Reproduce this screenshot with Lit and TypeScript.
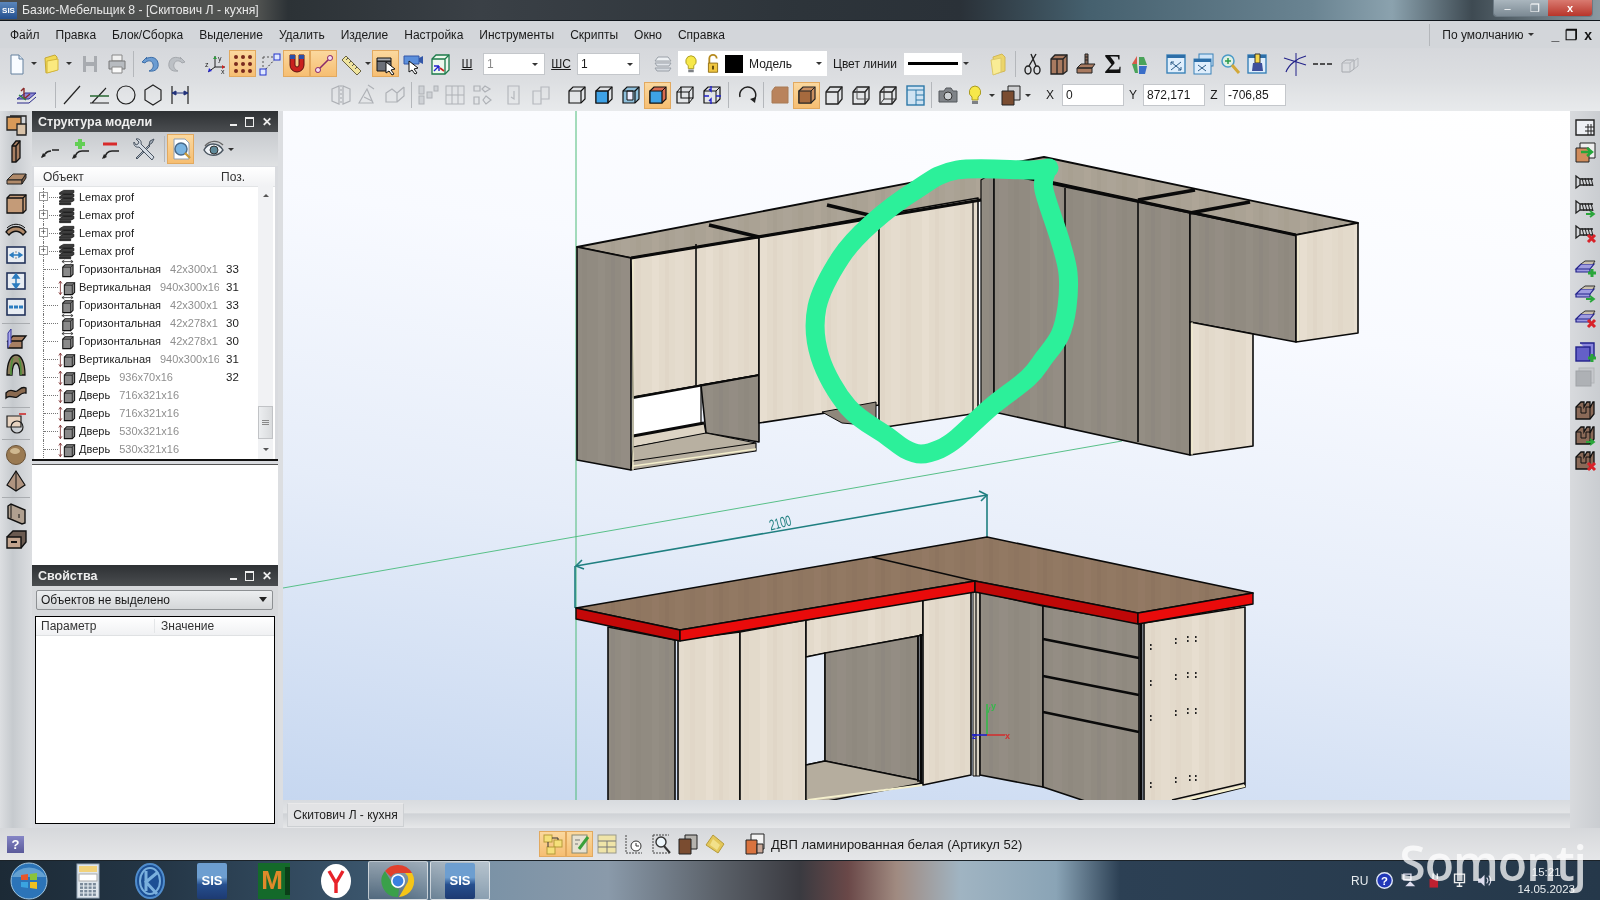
import { LitElement, css, html, svg } from "lit";
import { customElement } from "lit/decorators.js";

const slab = (f = "#b08a6a") => svg`<path d="M3 15l6-6h13l-4 6z" fill=${f} stroke="#222"/><path d="M3 15h15v4H3z" fill=${f} stroke="#222"/><path d="M18 15l4-6v4l-4 6z" fill="#7d5f48" stroke="#222"/>`;
const box = (f = "none", s = "#222") => svg`<path d="M4 9l4-5h12v12l-4 5H4z" fill=${f} stroke=${s} stroke-width="1.3"/><path d="M4 9h12v12M16 9l4-5" fill="none" stroke=${s} stroke-width="1.3"/>`;
const tile = (inner: unknown) => svg`<rect x="3" y="4" width="18" height="16" fill="#e8edf3" stroke="#22325a" stroke-width="1.6"/>${inner}`;
const screw = (extra: unknown = "") => svg`<path d="M3 6l4 3v6l-4 3zM7 9h13M7 15h13" fill="none" stroke="#222" stroke-width="1.3"/><path d="M9 8l2 8M12 8l2 8M15 8l2 8M18 8l2 8" stroke="#222"/>${extra}`;
const plus = svg`<path d="M15 18h8M19 14v8" stroke="#2aa63a" stroke-width="3"/>`;
const arrow = svg`<path d="M13 19h7m-3-3l4 3-4 3" fill="none" stroke="#2aa63a" stroke-width="1.8"/>`;
const cross = svg`<path d="M15 15l7 7M22 15l-7 7" stroke="#d8232a" stroke-width="3"/>`;
const plate = (extra: unknown = "") => svg`<path d="M3 14l5-5h13l-4 5zM3 14h14v3H3z" fill="#9f9ce0" stroke="#22228a" stroke-width="1.2"/><path d="M8 9l4-3h10l-2 3" fill="#c9c0ae" stroke="#333"/>${extra}`;
const notch = (extra: unknown = "") => svg`<path d="M3 21V9l5-5h3v5l3-5h3v6l3-6h1v12l-4 5z" fill="#8a6a58" stroke="#111" stroke-width="1.3"/><path d="M3 9h5v6h5v-6h4v12" fill="none" stroke="#111"/>${extra}`;
const fp = (c: string, s: string) => svg`<path d="M4 8l4-4h12v12l-4 4H4z" fill="none" stroke="#111" stroke-width="1.2"/><path d=${s} fill=${c} stroke="#111" stroke-width="1.1"/><path d="M4 8h12v12M16 8l4-4" fill="none" stroke="#111" stroke-width="1.2"/>`;

const ICONS: Record<string, unknown> = {
  doc: svg`<path d="M6 3h8l4 4v15H6z" fill="#f8fbff" stroke="#64809e"/><path d="M14 3v4h4" fill="#d8e4f0" stroke="#64809e"/>`,
  folder: svg`<path d="M5 6l10-3 2 2v13l-11 3z" fill="#f1d955" stroke="#c5a836"/><path d="M7 9l11-2v11l-11 3z" fill="#fbe97f" stroke="#d4b63c"/>`,
  save: svg`<path d="M5 4h14v16H5z" fill="#a8abb0"/><path d="M8 4h8v6H8zM8 14h8v6H8z" fill="#d8dadd"/>`,
  print: svg`<path d="M7 3h10v6H7z" fill="#f0f0f0" stroke="#888"/><path d="M4 9h16v8H4z" fill="#b7bbc0" stroke="#777"/><path d="M7 15h10v6H7z" fill="#fafafa" stroke="#888"/>`,
  undo: svg`<path d="M9 5l-5 5 3 1c2-3 7-3 8 1 1 3-1 6-4 7 7 1 10-3 9-8-1-6-8-7-12-4z" fill="#6b9cd2" stroke="#3d6ea8"/>`,
  redo: svg`<path d="M15 5l5 5-3 1c-2-3-7-3-8 1-1 3 1 6 4 7-7 1-10-3-9-8 1-6 8-7 12-4z" fill="#bcc0c5" stroke="#a5a8ad"/>`,
  axes: svg`<path d="M11 4v11l-7 5M11 15h10" fill="none" stroke="#222"/><text x="14" y="9" class="ti">y</text><text x="17" y="22" class="ti">x</text><text x="1" y="15" class="ti">z</text><path d="M11 4l-2 3h4z" fill="#2a9a3a"/><path d="M21 15l-3-2v4z" fill="#c22"/><path d="M4 20l1-4 3 3z" fill="#22c"/>`,
  grid: svg`<g fill="#7a2a1e">${[5, 12, 19].flatMap((x) => [5, 12, 19].map((y) => svg`<circle cx=${x} cy=${y} r="2"/>`))}</g>`,
  snap: svg`<path d="M5 20L19 5" stroke="#333" stroke-dasharray="2 2"/><path d="M5 5h14M5 5v15" stroke="#555" stroke-dasharray="2 2"/><rect x="16" y="2" width="6" height="6" fill="#dfe8ff" stroke="#23c"/><rect x="2" y="17" width="6" height="6" fill="#dfe8ff" stroke="#23c"/>`,
  magnet: svg`<path d="M5 3v10a7 7 0 0 0 14 0V3h-5v10a2 2 0 0 1-4 0V3z" fill="#c9211e" stroke="#5c1210"/><path d="M5 3h5v4H5z" fill="#2c4fa8"/><path d="M14 3h5v4h-5z" fill="#2c4fa8"/>`,
  linesnap: svg`<path d="M4 20L20 4" stroke="#8a2a6a" stroke-width="1.6"/><circle cx="6" cy="18" r="2.5" fill="#f7e0f0" stroke="#8a2a6a"/><circle cx="18" cy="6" r="2.5" fill="#f7e0f0" stroke="#8a2a6a"/>`,
  ruler: svg`<path d="M3 8l4-4 15 15-4 4z" fill="#efe49e" stroke="#6b6440"/><path d="M7 8l2-2M10 11l2-2M13 14l2-2M16 17l2-2" stroke="#555"/>`,
  sel: svg`<path d="M3 9h14v10H3z" fill="#6b6f78" stroke="#111"/><path d="M3 6h14v3H3z" fill="#a8abb0" stroke="#111"/><path d="M12 10l9 7-4 1 3 4-2 1-3-4-3 2z" fill="#fff" stroke="#111"/>`,
  sel2: svg`<path d="M3 4h15v8H3z" fill="#5b8fdb" stroke="#3357a8"/><path d="M18 6l4-2v8l-4-2z" fill="#3357a8"/><path d="M8 9l9 7-4 1 3 4-2 1-3-4-3 2z" fill="#fff" stroke="#111"/>`,
  box3: svg`<path d="M4 7l4-4h13v15l-4 4H4z" fill="#eef9ee" stroke="#1c7a4a" stroke-width="1.3"/><path d="M4 7h13v15M17 7l4-4" fill="none" stroke="#1c7a4a" stroke-width="1.3"/><path d="M6 19l5-5M11 14v5M11 14h-5" stroke="#22c" stroke-width="1.4"/><path d="M12 16l4 3" stroke="#c22" stroke-width="1.6"/>`,
  layers: svg`<path d="M7 5h10l3 4H4z" fill="#eef1f4" stroke="#9aa0a8"/><path d="M4 11h16l-2 3H6z" fill="#e1e5ea" stroke="#9aa0a8"/><path d="M4 16h16l-2 3H6z" fill="#d5dae0" stroke="#9aa0a8"/>`,
  bulb: svg`<path d="M12 3a6 6 0 0 0-3 11v3h6v-3a6 6 0 0 0-3-11z" fill="#f7e84a" stroke="#a99a20"/><path d="M9 18h6v3H9z" fill="#7d8085"/>`,
  lock: svg`<path d="M8 11V6a4 4 0 0 1 8 0" fill="none" stroke="#b58a1e" stroke-width="2"/><path d="M7 11h10v10H7z" fill="#f0c640" stroke="#8f6b10"/><path d="M12 14v4" stroke="#5a4308" stroke-width="2"/>`,
  folder2: svg`<path d="M6 5l9-3 3 3v14l-10 3z" fill="#ecd56a" stroke="#d2b856"/><path d="M4 8l10-2v14l-8 3z" fill="#f9ec95" stroke="#dcc86a"/>`,
  scissors: svg`<ellipse cx="8" cy="18" rx="3" ry="4" fill="none" stroke="#222" stroke-width="1.4"/><ellipse cx="17" cy="18" rx="3" ry="4" fill="none" stroke="#222" stroke-width="1.4"/><path d="M9 14l7-12M16 14L11 2" stroke="#222" stroke-width="1.4"/>`,
  cabinet: svg`<path d="M4 7l4-4h12v16l-4 3H4z" fill="#a87a60" stroke="#222" stroke-width="1.3"/><path d="M4 7h12v15M16 7l4-4M10 7v15" fill="none" stroke="#222" stroke-width="1.3"/>`,
  tool: svg`<path d="M11 2h3v11h-3z" fill="#8a6a58" stroke="#222"/><path d="M3 16l4-4h14l-3 4zM3 16h15v5H3z" fill="#a87a60" stroke="#222"/><path d="M11 5h3M11 8h3" stroke="#222"/>`,
  sigma: svg`<text x="12" y="21" class="sig">Σ</text>`,
  mosaic: svg`<path d="M9 4l-5 8h5z" fill="#d85a4a"/><path d="M9 12H4l3 9h3z" fill="#4aa35a"/><path d="M11 5h5l3 8h-8z" fill="#4aa35a"/><path d="M11 14h8l-2 8h-6z" fill="#3a6ec8"/>`,
  w1: svg`<rect x="3" y="3" width="18" height="18" fill="#dfeefc" stroke="#3a82b8" stroke-width="1.4"/><path d="M3 3h18v3H3z" fill="#2d6ea8"/><path d="M7 10l10 8M17 10L7 18M7 10h3M7 10v3M17 18h-3M17 18v-3" stroke="#2c5c88" fill="none"/>`,
  w2: svg`<rect x="8" y="2" width="14" height="12" fill="#cfe4f8" stroke="#3a82b8"/><rect x="3" y="7" width="17" height="15" fill="#dfeefc" stroke="#3a82b8"/><path d="M3 7h17v3H3z" fill="#2d6ea8"/><path d="M7 13l8 6M15 13l-8 6" stroke="#2c5c88"/>`,
  w3: svg`<circle cx="10" cy="9" r="6" fill="#dff0e4" stroke="#4a9ac8" stroke-width="1.5"/><path d="M10 6v6M7 9h6" stroke="#2a9a4a" stroke-width="1.5"/><path d="M14 13l7 8" stroke="#d2a838" stroke-width="3"/>`,
  w4: svg`<rect x="3" y="3" width="18" height="18" fill="#dfeefc" stroke="#3a82b8" stroke-width="1.4"/><path d="M3 3h18v3H3z" fill="#2d6ea8"/><path d="M10 2h5v9h-5z" fill="#f4d64a" stroke="#333"/><path d="M8 11h9l1 8H7z" fill="#3d4f9a"/>`,
  cutline: svg`<path d="M13 1v23" stroke="#23238a"/><path d="M1 6l22 7M3 20c3-8 12-14 20-16" fill="none" stroke="#23238a" stroke-width="1.2"/>`,
  dashes: svg`<path d="M3 12h5M10 12h5M17 12h5" stroke="#222" stroke-width="1.6"/>`,
  ghost: svg`<path d="M5 11l4-3h8v9l-4 3H5z" fill="none" stroke="#a5a8ad"/><path d="M5 11h8v9M13 11l4-3M17 9l4-3v8l-4 3" fill="none" stroke="#b5b8bd"/>`,
  plane: svg`<path d="M3 16l8-6h11l-7 6z" fill="#8f8ad8" stroke="#2a2a8a"/><path d="M3 20h12l7-6" fill="none" stroke="#2a2a8a"/><path d="M10 16V5M10 5L7 8M10 16l6-5" stroke="#8a2a2a" stroke-width="1.4" fill="none"/><path d="M5 12l7 5" stroke="#2a8a3a" stroke-width="1.4"/>`,
  line: svg`<path d="M4 21L20 3" stroke="#222" stroke-width="1.2"/>`,
  angle: svg`<path d="M3 20h19M3 13h19M5 20L19 5" fill="none" stroke="#222" stroke-width="1.1"/><path d="M3 13h19" stroke="#2a8a3a"/>`,
  circle: svg`<circle cx="12" cy="12" r="9" fill="none" stroke="#222" stroke-width="1.2"/>`,
  hex: svg`<path d="M12 2l8 5v10l-8 5-8-5V7z" fill="none" stroke="#222" stroke-width="1.2"/>`,
  dim: svg`<path d="M4 3v18M20 3v18" stroke="#222" stroke-width="1.2"/><path d="M4 10h16M4 10l4-2v4zM20 10l-4-2v4z" stroke="#22327a" fill="#22327a"/>`,
  g1: svg`<g fill="none" stroke="#aeb1b6" stroke-width="1.2"><path d="M3 6l7-3v18l-7-3zM21 6l-7-3v18l7-3z"/><path d="M12 2v20" stroke-dasharray="2 2"/></g>`,
  g2: svg`<g fill="none" stroke="#aeb1b6" stroke-width="1.2"><path d="M3 20l8-14 6 14zM12 2l6 4M8 14l8 4"/></g>`,
  g3: svg`<g fill="none" stroke="#aeb1b6" stroke-width="1.2"><path d="M3 10l6-4 5 4v9H3zM14 10l7-6M14 19l7-6v-9"/></g>`,
  g4: svg`<g fill="#cfd2d6" stroke="#aeb1b6"><rect x="3" y="3" width="5" height="8"/><rect x="3" y="13" width="5" height="8"/><rect x="11" y="9" width="5" height="6"/><rect x="18" y="3" width="4" height="5"/></g>`,
  g5: svg`<g fill="none" stroke="#aeb1b6"><rect x="3" y="3" width="18" height="18"/><path d="M9 3v18M15 3v18M3 12h18"/></g>`,
  g6: svg`<g fill="none" stroke="#aeb1b6" stroke-width="1.2"><path d="M4 3h6v5H4zM15 3l5 3-5 3-3-3zM4 14h5v7H4zM16 13l5 4-5 4-3-4z"/></g>`,
  g7: svg`<g fill="none" stroke="#b5b8bd" stroke-width="1.2"><path d="M6 3h11v18H6zM12 8v8l-3-2"/></g>`,
  g8: svg`<g fill="none" stroke="#b5b8bd" stroke-width="1.2"><path d="M4 8h8v13H4zM12 4h8v12h-8zM12 8v8"/></g>`,
  c1: fp("none", ""),
  c2: fp("#3ea2e6", "M4 8h12v12H4z"),
  c3: svg`<path d="M4 8l4-4h12v12l-4 4H4z" fill="#8fc0dc" stroke="#111" stroke-width="1.2"/><path d="M8 8h6v9H8z" fill="#eef" stroke="#111"/><path d="M4 8h12v12M16 8l4-4" fill="none" stroke="#111" stroke-width="1.2"/>`,
  c4: svg`<path d="M4 8l4-4h12v12l-4 4H4z" fill="#d86b50" stroke="#111" stroke-width="1.2"/><path d="M4 8h12v12H4z" fill="#3ea2e6" stroke="#111" stroke-width="1.2"/><path d="M16 8l4-4" stroke="#111"/>`,
  c5: svg`<path d="M4 9h12v11H4zM8 4h12v11H8z" fill="none" stroke="#111" stroke-width="1.2"/><path d="M4 9l4-5M16 9l4-5M16 20l4-5" stroke="#111"/>`,
  c6: svg`<path d="M4 8l4-4h12v12l-4 4H4z" fill="none" stroke="#111" stroke-width="1.2"/><path d="M4 8h12v12M16 8l4-4" fill="none" stroke="#111"/><path d="M11 3v5l-2-2M11 21v-5l-2 2M4 13h5M21 13h-5" fill="none" stroke="#22c" stroke-width="1.4"/>`,
  rotate: svg`<path d="M5 14a8 8 0 1 1 14 3" fill="none" stroke="#222" stroke-width="1.5"/><path d="M15 16l5 4 1-6z" fill="#222"/>`,
  browna: svg`<path d="M7 4h13v16H4V8z" fill="#b9835c" stroke="#a87a55"/>`,
  brownb: svg`<path d="M4 8l4-4h12v12l-4 4H4z" fill="#c98f60" stroke="#222" stroke-width="1.2"/><path d="M4 8h12v12H4z" fill="#a66a3e" stroke="#222" stroke-width="1.2"/><path d="M16 8l4-4" stroke="#222"/>`,
  wire1: box(),
  wire2: svg`${box()}<path d="M8 4v12h12" fill="none" stroke="#555"/>`,
  wire3: svg`${box()}<path d="M8 4v12h12M4 21l4-5" fill="none" stroke="#333"/>`,
  panels: svg`<rect x="4" y="3" width="17" height="19" fill="#cfe3f2" stroke="#2d78a8" stroke-width="1.4"/><path d="M4 7h17M13 7v15M13 12h8M13 17h8" stroke="#2d78a8"/>`,
  camera: svg`<path d="M3 8h5l2-3h5l2 3h4v11H3z" fill="#7f8388" stroke="#55585c"/><circle cx="12" cy="13" r="4" fill="#ccd0d4" stroke="#333"/>`,
  cubes: svg`<path d="M9 3h12v14H9z" fill="#cfd0d2" stroke="#222"/><path d="M3 8h12v14H3z" fill="#7a4c30" stroke="#222"/>`,
  stack: svg`<path d="M3 4h14v13H3z" fill="#d99a58" stroke="#222" stroke-width="1.3"/><path d="M6 3h16v18" fill="none" stroke="#222" stroke-width="1.3"/><path d="M13 11h9v11h-9z" fill="#d8c2a8" stroke="#222" stroke-width="1.3"/>`,
  pillar: svg`<path d="M8 7l4-5h4v17l-4 4H8z" fill="#a87f62" stroke="#111" stroke-width="1.3"/><path d="M8 7h4v16M12 7l4-5" fill="none" stroke="#111" stroke-width="1.3"/>`,
  slab: slab(),
  panel: svg`<path d="M3 7l3-3h16v15l-3 3H3z" fill="#c49b78" stroke="#111" stroke-width="1.3"/><path d="M3 7h16v15M19 7l3-3" fill="none" stroke="#111" stroke-width="1.3"/>`,
  curve: svg`<path d="M2 15c5-7 15-7 20 0l-3 3c-4-5-10-5-14 0z" fill="#b08a6a" stroke="#111" stroke-width="1.3"/><path d="M3 11c5-5 13-5 18 0" fill="none" stroke="#111"/>`,
  fh: tile(svg`<path d="M6 12h12M6 12l3-2v4zM18 12l-3-2v4z" stroke="#2b7cc0" fill="#2b7cc0" stroke-width="1.4"/><path d="M12 8v2M12 14v2" stroke="#888"/>`),
  fv: tile(svg`<path d="M12 5v14M12 5l-3 4h6zM12 19l-3-4h6z" stroke="#2b7cc0" fill="#2b7cc0" stroke-width="1.5"/>`),
  fm: tile(svg`<path d="M5 12h14" stroke="#2b7cc0" stroke-width="3" stroke-dasharray="4 1"/>`),
  cut: svg`<path d="M4 14l5-5h13l-4 5zM4 14h14v7H4z" fill="#a87f62" stroke="#111" stroke-width="1.3"/><path d="M4 21V6l3-4v14" fill="#aaa8ea" stroke="#33339a"/>`,
  arch: svg`<path d="M3 22C3 9 7 2 12 2s9 7 9 20h-5c0-8-2-12-4-12s-4 4-4 12z" fill="#8a7c58" stroke="#111" stroke-width="1.3"/><path d="M9 5c-2 4-2 10-2 17M15 5c2 4 2 10 2 17" stroke="#4f8f3a" stroke-width="1.6" fill="none"/>`,
  wave: svg`<path d="M2 14c5-6 8 0 11-2s5-5 9-3v5c-4-1-6 2-9 4s-7-3-11 1z" fill="#8a6a50" stroke="#111" stroke-width="1.3"/>`,
  hole: svg`<path d="M3 5h14v11H3z" fill="#e7d3c0" stroke="#222" stroke-width="1.2"/><path d="M15 3h7" stroke="#c22" stroke-width="1.5"/><circle cx="13" cy="16" r="6" fill="none" stroke="#222" stroke-width="1.2"/>`,
  sphere: svg`<circle cx="12" cy="12" r="9.5" fill="#9a7a52" stroke="#6a5236"/><ellipse cx="11" cy="8" rx="5" ry="3" fill="#cfb890"/>`,
  pyramid: svg`<path d="M12 2L3 16l9 6 9-6z" fill="#b09480" stroke="#111" stroke-width="1.2"/><path d="M12 2v20" stroke="#111"/>`,
  doorb: svg`<path d="M4 5l3-2 14 6v13l-3 1L4 17z" fill="#b0a090" stroke="#111" stroke-width="1.4"/><path d="M7 3v14M15 13v4" stroke="#111"/>`,
  drawer: svg`<path d="M3 10l6-6h13v11l-5 6" fill="#6a5a50" stroke="#111" stroke-width="1.4"/><path d="M3 10h14v11H3z" fill="#c2a48e" stroke="#111" stroke-width="1.4"/><path d="M7 15h6" stroke="#111" stroke-width="2"/>`,
  rgrid: svg`<path d="M3 5h18v15H3z" fill="#eef0f4" stroke="#222" stroke-width="1.4"/><path d="M12 12h9M12 16h9M15 9v11M18 9v11" stroke="#222"/>`,
  rexp: svg`<path d="M7 3h15v15H7z" fill="#eee" stroke="#222"/><path d="M3 8h13v14H3z" fill="#d08c5c" stroke="#222"/><path d="M8 12h10m-4-4l5 4-5 4" fill="none" stroke="#26a63a" stroke-width="2.4"/>`,
  s1: screw(),
  s2: screw(arrow),
  s3: screw(cross),
  p1: plate(plus),
  p2: plate(arrow),
  p3: plate(cross),
  sq1: svg`<path d="M7 3h14v14" fill="#8a86dc" stroke="#22228a" stroke-width="1.4"/><rect x="3" y="7" width="14" height="14" fill="#6460c8" stroke="#22228a" stroke-width="1.4"/>${plus}`,
  sq2: svg`<rect x="6" y="3" width="15" height="15" fill="#c6c8cc" stroke="#b2b5b8"/><rect x="3" y="6" width="15" height="15" fill="#aeb1b5" stroke="#a0a3a7"/>`,
  n1: notch(),
  n2: notch(arrow),
  n3: notch(cross),
  tadd: svg`<path d="M4 20l3-3M7 17c2-3 4-3 6-3" fill="none" stroke="#222" stroke-width="1.5"/><path d="M14 13h7" stroke="#222" stroke-width="1.5"/><path d="M3 21l2-5 3 3z" fill="#222"/>`,
  tplus: svg`<path d="M6 21l3-5c2-2 3-2 5-2h7" fill="none" stroke="#222" stroke-width="1.5"/><path d="M4 22l2-5 3 3z" fill="#222"/><path d="M7 7h10M12 2v10" stroke="#63cf55" stroke-width="4"/>`,
  tminus: svg`<path d="M6 21l3-5c2-2 3-2 5-2h7" fill="none" stroke="#222" stroke-width="1.5"/><path d="M4 22l2-5 3 3z" fill="#222"/><path d="M5 7h14" stroke="#d82a2a" stroke-width="3"/>`,
  tools: svg`<path d="M3 21l13-13 1-4 4-2-2 4-3 2 1 1-13 13z" fill="#aab4c0" stroke="#4a5562"/><path d="M21 20L8 7c1-3-2-6-5-5l3 3-1 2-2 1-2-3c-1 3 2 6 5 5l13 13z" fill="#d3dae2" stroke="#4a5562"/>`,
  tfind: svg`<path d="M5 2h11l4 4v16H5z" fill="#fff" stroke="#8ea0b8"/><circle cx="12" cy="12" r="6" fill="#7ab4e2" stroke="#4a6a8a" stroke-width="1.5"/><path d="M16 16l5 5" stroke="#c99a3a" stroke-width="2.4"/>`,
  teye: svg`<path d="M2 13c4-8 14-8 19 0-5 7-15 7-19 0z" fill="#eef2f6" stroke="#4a5560" stroke-width="1.4"/><circle cx="12" cy="13" r="4" fill="#5f8a9a" stroke="#333"/><path d="M3 9C8 3 16 3 21 8" fill="none" stroke="#666" stroke-width="1.4"/>`,
  stree: svg`<rect x="3" y="3" width="8" height="7" fill="#f5e07a" stroke="#b59a3a"/><rect x="13" y="8" width="8" height="7" fill="#f5e07a" stroke="#b59a3a"/><rect x="6" y="15" width="8" height="7" fill="#f5e07a" stroke="#b59a3a"/><path d="M7 10v5M11 6h6v2" fill="none" stroke="#333"/>`,
  sedit: svg`<rect x="4" y="3" width="15" height="18" fill="#e6e2d2" stroke="#8a8a70"/><path d="M11 17l9-12" stroke="#3aa03a" stroke-width="3"/><path d="M7 8h5M7 12h3" stroke="#777"/>`,
  sgrid: svg`<rect x="3" y="3" width="18" height="18" fill="#efe4a8" stroke="#9a9a8a"/><path d="M3 9h18M3 15h18M12 9v12" stroke="#777"/>`,
  stime: svg`<path d="M4 3v18h16" fill="none" stroke="#444" stroke-dasharray="2 1"/><circle cx="14" cy="14" r="5" fill="#fff" stroke="#333"/><path d="M14 11v3h3" fill="none" stroke="#333"/>`,
  sfind: svg`<path d="M4 3v18h16M4 3h16" fill="none" stroke="#444" stroke-dasharray="2 1"/><circle cx="12" cy="10" r="5" fill="#eef6fb" stroke="#333" stroke-width="1.4"/><path d="M15 14l6 7" stroke="#333" stroke-width="2"/>`,
  scubes: svg`<path d="M9 3h12v14H9z" fill="#b5b3ae" stroke="#222"/><path d="M3 7h12v15H3z" fill="#7a4c30" stroke="#222"/>`,
  sgold: svg`<path d="M10 3l11 9-6 9L3 13z" fill="#e3c75a" stroke="#b59a3a"/><path d="M10 7l7 6-3 5-7-5z" fill="#f2e08a"/>`,
  smat: svg`<path d="M8 2h13v15H8z" fill="#f4f4f4" stroke="#222"/><path d="M3 8h11v14H3z" fill="#d9733f" stroke="#222"/><path d="M14 12h6v9h-6z" fill="#c9a898" stroke="#222"/>`,
  stackdark: svg`<g fill="#3d3d3d" stroke="#111"><path d="M2 6l5-3h13v3l-4 2H2z"/><path d="M2 11l5-3h13v3l-4 2H2z"/><path d="M2 16l5-3h13v3l-4 2H2z"/><path d="M2 19h14v2H2z"/></g>`,
  nodeh: svg`<path d="M5 2h14M5 2l3-2M5 2l3 2M19 2l-3-2M19 2l-3 2" stroke="#333" fill="none"/><path d="M6 9l3-3h10v12l-3 3H6z" fill="#8a8a8a" stroke="#111" stroke-width="1.3"/><path d="M6 9h10v12M16 9l3-3" fill="none" stroke="#111"/>`,
  nodev: svg`<path d="M3 4v17M3 4l-2 3M3 4l2 3M3 21l-2-3M3 21l2-3" stroke="#7a2a2a" fill="none"/><path d="M8 9l3-3h10v12l-3 3H8z" fill="#8a8a8a" stroke="#111" stroke-width="1.3"/><path d="M8 9h10v12M18 9l3-3" fill="none" stroke="#111"/>`,
};

const icon = (n: string) => html`<svg class="ic" viewBox="0 0 24 24">${ICONS[n]}</svg>`;

// token syntax: "name", "name!" pressed, "^" caret, "|" separator, number = spacer
const bar = (items: (string | number)[]) =>
  items.map((t) => {
    if (typeof t === "number") return html`<span class="sp" style="width:${t}px"></span>`;
    if (t === "^") return html`<span class="caret"></span>`;
    if (t === "|") return html`<span class="sep"></span>`;
    const on = t.endsWith("!");
    return html`<span class="b ${on ? "on" : ""}">${icon(on ? t.slice(0, -1) : t)}</span>`;
  });

const MENU = ["Файл", "Правка", "Блок/Сборка", "Выделение", "Удалить", "Изделие", "Настройка", "Инструменты", "Скрипты", "Окно", "Справка"];

const TREE: { k: string; n: string; d?: string; p?: string }[] = [
  { k: "g", n: "Lemax prof" },
  { k: "g", n: "Lemax prof" },
  { k: "g", n: "Lemax prof" },
  { k: "g", n: "Lemax prof" },
  { k: "h", n: "Горизонтальная", d: "42x300x1", p: "33" },
  { k: "v", n: "Вертикальная", d: "940x300x16", p: "31" },
  { k: "h", n: "Горизонтальная", d: "42x300x1", p: "33" },
  { k: "h", n: "Горизонтальная", d: "42x278x1", p: "30" },
  { k: "h", n: "Горизонтальная", d: "42x278x1", p: "30" },
  { k: "v", n: "Вертикальная", d: "940x300x16", p: "31" },
  { k: "v", n: "Дверь", d: "936x70x16", p: "32" },
  { k: "v", n: "Дверь", d: "716x321x16" },
  { k: "v", n: "Дверь", d: "716x321x16" },
  { k: "v", n: "Дверь", d: "530x321x16" },
  { k: "v", n: "Дверь", d: "530x321x16" },
];

const LIGHT = "url(#wl)";
const GREY = "url(#wg)";
const BROWN = "url(#wb)";
const poly = (pts: string, fill: string, sw = 1.6) => svg`<polygon points=${pts} fill=${fill} stroke="#0a0a0a" stroke-width=${sw} stroke-linejoin="round"/>`;
const seg = (x1: number, y1: number, x2: number, y2: number, w = 1.6, c = "#0a0a0a") => svg`<line x1=${x1} y1=${y1} x2=${x2} y2=${y2} stroke=${c} stroke-width=${w}/>`;

const LOOP: [number, number][] = [
  [1049, 168], [1031, 170], [957, 170], [916, 190], [872, 223], [841, 257], [817, 307], [820, 357], [848, 407],
  [887, 436], [905, 449], [921, 454], [940, 449], [957, 438], [991, 407], [1028, 378], [1044, 358], [1060, 335], [1067, 307], [1068, 273], [1060, 240], [1044, 190], [1046, 172],
];
// catmull-rom through the hand drawn marker points
const smooth = (p: [number, number][]) => {
  let d = `M${p[0][0]} ${p[0][1]}`;
  for (let i = 0; i < p.length - 1; i++) {
    const a = p[Math.max(i - 1, 0)], b = p[i], c = p[i + 1], e = p[Math.min(i + 2, p.length - 1)];
    d += `C${b[0] + (c[0] - a[0]) / 6} ${b[1] + (c[1] - a[1]) / 6} ${c[0] - (e[0] - b[0]) / 6} ${c[1] - (e[1] - b[1]) / 6} ${c[0]} ${c[1]}`;
  }
  return d;
};

const stripes = (id: string, base: string, hi: string, lo: string) => svg`
  <pattern id=${id} patternUnits="userSpaceOnUse" width="54" height="40">
    <rect width="54" height="40" fill=${base}/>
    <rect x="4" width="7" height="40" fill=${hi} opacity=".35"/>
    <rect x="17" width="4" height="40" fill=${lo} opacity=".25"/>
    <rect x="27" width="9" height="40" fill=${hi} opacity=".25"/>
    <rect x="42" width="5" height="40" fill=${lo} opacity=".2"/>
  </pattern>`;

const model = () => svg`
  <defs>
    ${stripes("wl", "#e3dacb", "#ece5d8", "#d7cdbc")}
    ${stripes("wg", "#918b81", "#9a948a", "#85807a")}
    ${stripes("wt", "#aaa294", "#b3ab9e", "#a09788")}
    ${stripes("wb", "#907761", "#977e69", "#856c58")}
  </defs>
  <line x1="283" y1="588" x2="1122" y2="441" stroke="#58c088" stroke-width="1"/>
  <line x1="576" y1="111" x2="576" y2="800" stroke="#4dbb78" stroke-width="1"/>

  <!-- wall units -->
  ${poly("577,247 1044,157 1358,223 1296,235 994,170 981,200 631,258", "url(#wt)", 1.8)}
  ${poly("577,247 631,258 631,470 577,460", GREY)}
  ${poly("631,258 759,237 759,375 633,397", LIGHT)}
  ${poly("633,397 701,385 701,424 633,436", "#fff", 1.2)}
  ${poly("701,385 759,375 759,442 706,433", GREY)}
  ${poly("633,436 704,423 706,434 633,447", "#ddd4c4", 1.2)}
  ${poly("633,447 706,433 756,443 756,451 631,470", "#b8b0a1", 1.2)}
  ${seg(633, 436, 704, 423, 2.8)}
  ${seg(633, 461, 756, 443, 1.2)}
  ${seg(633, 466, 756, 449, 1.4, "#f4efcc")}
  ${seg(633, 398, 759, 375, 1.8)}
  ${seg(696, 244, 696, 385)}
  ${seg(633, 258, 633, 470, 1.2, "#f4efcc")}
  ${poly("759,237 879,215 879,405 759,423", LIGHT)}
  ${poly("822,412 876,402 876,426 842,423", "#8f877b", 1)}
  ${poly("879,215 978,198 978,413 879,428", LIGHT)}
  ${seg(973, 200, 973, 414, 1.2)}
  ${poly("981,180 994,172 994,410 981,412", GREY, 1.2)}
  ${poly("994,172 1190,213 1190,455 994,412", GREY)}
  ${seg(1065, 188, 1065, 428)}
  ${seg(1138, 201, 1138, 442)}
  ${poly("1190,213 1296,235 1296,342 1190,322", GREY)}
  ${poly("1190,322 1253,334 1253,446 1190,455", LIGHT)}
  ${seg(1192, 322, 1192, 455, 1, "#f4efcc")}
  ${poly("1296,235 1358,223 1358,333 1296,342", LIGHT)}
  ${seg(1298, 236, 1298, 341, 1, "#f4efcc")}
  ${seg(631, 258, 981, 200, 3)}
  ${seg(994, 170, 1296, 235, 3)}
  ${seg(709, 225, 759, 237, 3.5)}
  ${seg(827, 205, 869, 215, 3.5)}
  ${seg(1195, 190, 1138, 200, 3.5)}
  ${seg(1250, 202, 1190, 213, 3.5)}
  <path d=${smooth(LOOP)} fill="none" stroke="#2cf09a" stroke-width="19" stroke-linecap="round" stroke-linejoin="round"/>

  <!-- dimension -->
  <g stroke="#1f7f80" stroke-width="1.6" fill="none">
    <path d="M575 566V608M987 495V537M576 566L987 495"/>
    <path d="M582 560l-6 6 8 3M979 491l8 4-6 6"/>
  </g>
  <text x="780" y="528" class="dimt" textLength="22" lengthAdjust="spacingAndGlyphs" text-anchor="middle" transform="rotate(-14 780 522)">2100</text>

  <!-- base units -->
  ${poly("608,627 675,640 675,805 608,805", GREY)}
  ${poly("678,640 740,632 740,805 678,805", LIGHT)}
  ${poly("740,632 806,620 806,805 740,805", LIGHT)}
  ${poly("806,620 923,598 923,635 806,657", LIGHT)}
  ${poly("806,657 825,653 825,761 806,765", "#e7eef9", 1.4)}
  ${poly("825,653 918,636 918,780 825,761", GREY)}
  ${poly("806,765 825,761 918,780 923,783 806,805", "#b5ad9e", 1.4)}
  ${seg(808, 800, 923, 785, 2, "#f4efcc")}
  ${seg(918, 636, 918, 782, 1.5)}
  ${seg(921, 634, 921, 783, 3)}
  ${poly("923,600 971,590 971,775 923,785", LIGHT)}
  ${poly("973,590 980,590 980,776 973,776", "#d9d2c4", 1)}
  ${seg(976, 590, 976, 776, 1.2)}
  ${poly("980,592 1043,606 1043,787 980,775", GREY)}
  ${poly("1043,606 1139,623 1139,805 1097,805 1043,787", GREY)}
  ${seg(1043, 639, 1139, 658, 2.8)}
  ${seg(1043, 676, 1139, 695, 2.8)}
  ${seg(1043, 712, 1139, 732, 2.8)}
  ${poly("1144,623 1245,607 1245,787 1172,805 1144,805", LIGHT)}
  ${seg(1141, 623, 1141, 805, 3)}
  ${seg(1172, 800, 1245, 783, 1.5)}
  ${seg(1172, 803, 1245, 786, 2, "#f6f1cf")}
  <g fill="#222">
    ${[[1150, 647], [1150, 683], [1150, 718], [1150, 785], [1175, 641], [1175, 677], [1175, 713], [1175, 780], [1187, 639], [1195, 639], [1187, 675], [1195, 675], [1187, 711], [1195, 711], [1189, 778], [1195, 778]].map(([x, y]) => svg`<rect x=${x} y=${y - 3} width="1.6" height="2"/><rect x=${x} y=${y + 1} width="1.6" height="2"/>`)}
  </g>
  ${poly("576,608 872,557 987,537 1253,593 1138,613 975,581 680,630", BROWN)}
  ${seg(872, 557, 975, 581)}
  ${poly("576,608 680,630 680,641 576,619", "#c40808", 1.4)}
  ${poly("680,630 975,581 975,592 680,641", "#e90b0b", 1.4)}
  ${poly("975,581 1138,613 1138,624 975,592", "#bf0808", 1.4)}
  ${poly("1138,613 1253,593 1253,604 1138,624", "#e90b0b", 1.4)}

  <!-- axis triad -->
  <path d="M987 735V704" stroke="#34b84a" stroke-width="1.6"/><path d="M988 713l2-6" stroke="#34b84a"/>
  <path d="M987 735h-15" stroke="#2020c8" stroke-width="1.6"/><path d="M987 735h18" stroke="#d03030" stroke-width="1.6"/>
  <text x="991" y="709" class="ax" fill="#34b84a">y</text>
  <text x="972" y="739" class="ax" fill="#2020c8">z</text>
  <text x="1005" y="739" class="ax" fill="#d03030">x</text>
`;

@customElement("app-root")
export class AppRoot extends LitElement {
  static styles = css`
    :host {
      display: flex;
      flex-direction: column;
      width: 1600px;
      height: 900px;
      overflow: hidden;
      position: relative;
      font-family: "Liberation Sans", Arial, sans-serif;
      font-size: 12px;
      color: #1a1a1a;
      background: #d9dbdf;
      filter: blur(0.4px);
    }
    .ic { width: 24px; height: 24px; display: block; overflow: visible; }
    .ti { font: 7px "Liberation Sans", sans-serif; fill: #222; }
    .sig { font: bold 27px "Liberation Serif", serif; fill: #111; text-anchor: middle; }
    .sp { flex: none; display: block; }
    .b { flex: none; width: 27px; height: 27px; display: flex; align-items: center; justify-content: center; box-sizing: border-box; }
    .b.on { background: linear-gradient(#fbd9a0, #f6bd70); box-shadow: inset 0 0 0 1px #e2a95f; }
    .caret { flex: none; width: 8px; height: 27px; display: flex; align-items: center; justify-content: center; }
    .caret::after { content: ""; border: 3px solid transparent; border-top: 3px solid #333; border-bottom: 0; }
    .sep { flex: none; width: 6px; display: flex; justify-content: center; }
    .sep::after { content: ""; width: 1px; height: 26px; background: #b4b7bb; }

    .title {
      flex: none; height: 20px; display: flex; align-items: center; gap: 5px; position: relative;
      border-bottom: 1px solid #10161c; color: #e8e8e8; font-size: 12.2px; box-sizing: content-box;
      background: linear-gradient(90deg, #4a4c4c 0, #525452 16%, #2c3236 18%, #3a4046 30%, #2d343a 50%, #2a3138 60%, #45606e 68%, #6a8492 82%, #8ba2ae 87%, #3e4a52 92%, #8a9aa2 100%);
    }
    .logo { width: 17px; height: 17px; background: linear-gradient(#5b86bb, #24508f); color: #fff; font: bold 8px "Liberation Sans", sans-serif; display: flex; align-items: center; justify-content: center; }
    .winbtns { margin-left: auto; margin-right: 7px; display: flex; align-self: flex-start; height: 16px; border: 1px solid #6c7a84; border-top: 0; border-radius: 0 0 4px 4px; overflow: hidden; }
    .winbtns span { width: 27px; display: flex; align-items: center; justify-content: center; background: linear-gradient(#aab6be, #7c8a94); color: #fff; font-size: 11px; }
    .winbtns span.x { width: 44px; background: linear-gradient(#d97a70, #b8352a); font-weight: bold; }

    .menu { flex: none; height: 27px; display: flex; align-items: center; padding-left: 10px; gap: 16px; background: #d3d6da; }
    .right-menu { margin-left: auto; display: flex; align-items: center; }
    .right-menu .label { border-left: 1px solid #b4b7bb; padding: 4px 4px 4px 12px; }
    .right-menu .ctl { display: flex; gap: 6px; margin: 0 8px 0 16px; font-weight: bold; font-size: 14px; color: #111; }

    .tb { flex: none; height: 31px; display: flex; align-items: center; }
    .tb1 { background: linear-gradient(#d6d8dc, #dcdee1); }
    .tb2 { height: 32px; background: linear-gradient(#dcdee1, #e8eaec); }
    .lab { flex: none; text-align: center; }
    .under { text-decoration: underline; }
    .inp { flex: none; height: 22px; box-sizing: border-box; background: #fff; border: 1px solid #c4c7cb; display: flex; align-items: center; padding: 0 3px; position: relative; }
    .inp.drop::after { content: ""; position: absolute; right: 6px; top: 9px; border: 3px solid transparent; border-top: 3px solid #333; border-bottom: 0; }
    .w62 { width: 62px; }
    .w63 { width: 63px; }
    .muted { color: #8b8b8b; }
    .combo { flex: none; width: 149px; height: 25px; margin-left: 2px; padding-left: 2px; display: flex; align-items: center; background: #fff; position: relative; box-sizing: border-box; }
    .combo .ic { width: 22px; height: 22px; }
    .combo .swatch { width: 18px; height: 18px; background: #000; margin: 0 6px 0 1px; }
    .combo::after { content: ""; position: absolute; right: 5px; top: 11px; border: 3px solid transparent; border-top: 3px solid #333; border-bottom: 0; }
    .lineinp { flex: none; width: 58px; height: 22px; background: #fff; display: flex; align-items: center; justify-content: center; margin-left: 7px; }
    .lineinp i { width: 50px; height: 3px; background: #000; display: block; }

    .main { flex: 1; min-height: 0; display: flex; }
    .left { flex: none; width: 32px; display: flex; flex-direction: column; align-items: center; padding-top: 1px; box-sizing: border-box; background: linear-gradient(90deg, #dcdee1, #c6cace 40%, #dcdee1); }
    .left .b { height: 26px; }
    .hsep { flex: none; height: 6px; width: 28px; display: flex; align-items: center; }
    .hsep::after { content: ""; height: 1px; width: 100%; background: #a9acb0; }
    .panels { flex: none; width: 246px; display: flex; flex-direction: column; }
    .ptitle { flex: none; height: 21px; display: flex; align-items: center; padding: 0 6px 0 6px; background: linear-gradient(#2e3134, #4a4d50); color: #eee; font-weight: bold; font-size: 12.5px; }
    .ptitle .ctl { margin-left: auto; display: flex; gap: 8px; align-items: center; }
    .ptitle .ctl i { display: block; width: 7px; height: 2px; background: #eee; margin-top: 6px; }
    .ptitle .ctl u { display: block; width: 7px; height: 7px; border: 1px solid #eee; border-top-width: 2px; }
    .ptitle .ctl b { font-size: 12px; line-height: 10px; }
    .ptools { flex: none; height: 34px; display: flex; align-items: center; padding-left: 4px; background: linear-gradient(#c8cbcf, #dfe1e3); }
    .ptools .b { width: 27px; height: 30px; }
    .tree { flex: none; height: 292px; margin: 1px 3px 0 2px; background: #fff; position: relative; display: flex; flex-direction: column; overflow: hidden; }
    .thead { flex: none; height: 19px; display: flex; align-items: center; padding-left: 9px; background: linear-gradient(#fff, #f1f2f4); border-bottom: 1px solid #e2e4e6; font-size: 12px; color: #333; }
    .thead .pos { margin-left: auto; margin-right: 30px; }
    .rows { flex: 1; display: flex; flex-direction: column; margin-right: 17px; padding-top: 1px; }
    .row { flex: none; height: 18px; display: flex; align-items: center; font-size: 11px; white-space: nowrap; position: relative; }
    .node { flex: none; width: 15px; height: 18px; position: relative; border-left: 1px dotted #777; margin-left: 9px; box-sizing: border-box; }
    .node::after { content: ""; position: absolute; left: 0; right: 0; top: 9px; border-top: 1px dotted #777; }
    .node .pm { position: absolute; left: -5px; top: 4px; width: 9px; height: 9px; box-sizing: border-box; border: 1px solid #999; background: #fff; z-index: 1; color: #333; font-size: 9px; line-height: 7px; text-align: center; }
    .row .ic { flex: none; width: 19px; height: 19px; margin: 0 2px 0 0; }
    .row .nm { flex: none; }
    .row .dm { color: #8f8f8f; margin-left: 9px; overflow: hidden; flex: 1; min-width: 0; }
    .row .ps { flex: none; width: 18px; margin-left: 7px; margin-right: 14px; font-size: 11.5px; }
    .sb { position: absolute; right: 2px; top: 19px; bottom: 0; width: 15px; background: #f1f2f4; display: flex; flex-direction: column; align-items: center; }
    .sb .up, .sb .dn { flex: none; height: 19px; width: 100%; display: flex; align-items: center; justify-content: center; }
    .sb .up::after { content: ""; border: 3.5px solid transparent; border-bottom: 3.5px solid #555; border-top: 0; }
    .sb .dn::after { content: ""; border: 3.5px solid transparent; border-top: 3.5px solid #555; border-bottom: 0; }
    .sb .track { flex: 1; width: 100%; display: flex; flex-direction: column; justify-content: flex-end; padding-bottom: 1px; box-sizing: border-box; }
    .sb .thumb { height: 33px; background: linear-gradient(90deg, #eceef0, #d9dbdd); border: 1px solid #c1c3c6; box-sizing: border-box; display: flex; flex-direction: column; gap: 1px; align-items: center; justify-content: center; }
    .sb .thumb i { display: block; width: 7px; height: 1px; background: #888; }
    .divider { flex: none; height: 3px; border-top: 2px solid #111; border-bottom: 1px solid #555; }
    .blank { flex: 1; background: #fff; }
    .propsel { flex: none; height: 30px; padding: 4px 5px 0 4px; box-sizing: border-box; background: #d7d9dc; }
    .propsel div { height: 20px; box-sizing: border-box; border: 1px solid #8d9093; border-radius: 2px; background: linear-gradient(#eceef0, #d5d7d9); display: flex; align-items: center; padding: 0 4px; font-size: 12px; position: relative; }
    .propsel div::after { content: ""; position: absolute; right: 5px; top: 6px; border: 4px solid transparent; border-top: 5px solid #222; border-bottom: 0; }
    .proptable { flex: none; height: 208px; margin: 0 3px 4px 3px; box-sizing: border-box; border: 1.5px solid #000; background: #fff; }
    .proptable .hd { height: 18px; display: flex; align-items: center; background: linear-gradient(#fff, #f0f1f3); border-bottom: 1px solid #dfe1e3; font-size: 12px; color: #333; }
    .proptable .hd span:first-child { width: 119px; padding-left: 5px; box-sizing: border-box; border-right: 1px solid #e4e6e8; }
    .proptable .hd span:last-child { padding-left: 6px; }
    .splitter { flex: none; width: 5px; background: #dcdee1; }
    .center { flex: 1; min-width: 0; display: flex; flex-direction: column; }
    .view { flex: 1; min-height: 0; background: linear-gradient(188deg, #fff 0%, #f8faff 30%, #e6edf9 62%, #c6d7f0 100%); }
    .view svg { width: 100%; height: 100%; display: block; }
    .ax { font: bold 9px "Liberation Sans", sans-serif; }
    .dimt { font: 15px "Liberation Sans", sans-serif; fill: #1f7f80; }
    .tabs { flex: none; height: 28px; display: flex; align-items: flex-start; padding: 3px 0 0 4px; box-sizing: border-box; background: linear-gradient(#d8dbdf, #e2e4e6 45%, #cfd2d6 50%, #e6e7e9); }
    .tab { height: 24px; width: 117px; display: flex; align-items: center; justify-content: center; background: #e2e3e5; border: 1px solid #cdd0d3; border-top-color: #e9e9ea; box-sizing: border-box; font-size: 12px; color: #222; }
    .right { flex: none; width: 30px; display: flex; flex-direction: column; align-items: center; padding-top: 3px; box-sizing: border-box; background: linear-gradient(90deg, #d8dadd, #cacdd1); }
    .right .b { height: 25px; width: 25px; }
    .right .h1 { height: 5px; }
    .right .h2 { height: 10px; }
    .right .h3 { height: 8px; }

    .status { flex: none; height: 32px; display: flex; align-items: center; padding-left: 3px; box-sizing: border-box; background: linear-gradient(#d6d8db, #e5e6e8); }
    .help { flex: none; width: 17px; height: 17px; background: linear-gradient(#8585c5, #5a5a9a); color: #fff; font-weight: bold; font-size: 13px; display: flex; align-items: center; justify-content: center; margin-left: 4px; }
    .status .b { height: 26px; }
    .status .txt { margin-left: 3px; font-size: 13px; }
    .taskbar {
      flex: none; height: 40px; display: flex; align-items: center; position: relative; box-sizing: border-box;
      border-top: 1.5px solid #1b2228;
      background: linear-gradient(90deg, #1c2a36 0, #243646 10%, #3e5a72 25%, #7a92a6 30%, #8a9aaa 38%, #5a6068 45%, #3a3a40 50%, #6a4848 53%, #a08a80 56%, #a0b4c2 60%, #8aa4b6 66%, #2c4054 70%, #25384a 100%);
    }
    .task { flex: none; width: 62px; height: 39px; display: flex; align-items: center; justify-content: center; box-sizing: border-box; }
    .task.open { width: 60px; margin: 0 1px; background: linear-gradient(rgba(255, 255, 255, .45), rgba(255, 255, 255, .12)); border: 1px solid rgba(255, 255, 255, .6); border-radius: 2px; }
    .task.start { width: 57px; }
    .logo32 { width: 30px; height: 36px; border-radius: 2px; background: linear-gradient(#6d9ed0 40%, #264f8e 60%, #1d3a72); color: #fff; font: bold 13px "Liberation Sans", sans-serif; display: flex; align-items: center; justify-content: center; }
    .tray { margin-left: auto; display: flex; align-items: center; gap: 8px; color: #e8edf0; font-size: 12px; padding-right: 25px; position: relative; }
    .tray .ic { width: 17px; height: 17px; }
    .clock { text-align: center; font-size: 11.5px; line-height: 17px; margin-left: 16px; }
    .mark { position: absolute; right: 14px; top: -34px; font: 600 48px "Open Sans", sans-serif; letter-spacing: -1px; color: rgba(255, 255, 255, .74); pointer-events: none; }
  `;

  render() {
    return html`
      <div class="title">
        <span class="logo">SIS</span>
        <span>Базис-Мебельщик 8 - [Скитович Л - кухня]</span>
        <div class="winbtns"><span>–</span><span>❐</span><span class="x">x</span></div>
      </div>

      <div class="menu">
        ${MENU.map((m) => html`<span>${m}</span>`)}
        <div class="right-menu">
          <span class="label">По умолчанию</span><span class="caret"></span>
          <span class="ctl"><span>_</span><span>❐</span><span>x</span></span>
        </div>
      </div>

      <div class="tb tb1">
        ${bar([3, "doc", "^", "folder", "^", 3, "save", "print", "|", "undo", "redo", 12, "axes", "grid!", "snap", "magnet!", "linesnap!", "ruler", "^", "sel!", "sel2", "box3", 6])}
        <span class="lab under" style="width:16px">Ш</span>${bar([8])}
        <span class="inp w62 drop muted">1</span>${bar([6])}
        <span class="lab under" style="width:20px">ШС</span>${bar([6])}
        <span class="inp w63 drop">1</span>${bar([9, "layers"])}
        <span class="combo">${icon("bulb")}${icon("lock")}<span class="swatch"></span>Модель</span>
        ${bar([6])}<span class="lab">Цвет линии</span>
        <span class="lineinp"><i></i></span>
        ${bar(["^", 16, "folder2", "|", "scissors", "cabinet", "tool", "sigma", "mosaic", 9, "w1", "w2", "w3", "w4", 11, "cutline", "dashes", "ghost"])}
      </div>

      <div class="tb tb2">
        ${bar([12, "plane", 13, "|", "line", "angle", "circle", "hex", "dim", 134, "g1", "g2", "g3", "|", "g4", "g5", "g6", 5, "g7", "g8", 9, "c1", "c2", "c3", "c4!", "c5", "c6", "|", 2, "rotate", "|", "browna", "brownb!", "wire1", "wire2", "wire3", "panels", "|", "camera", "bulb", "^", 1, "cubes", "^", 13])}
        <span class="lab" style="width:10px">X</span>${bar([7])}
        <span class="inp w62">0</span>${bar([4])}
        <span class="lab" style="width:10px">Y</span>${bar([5])}
        <span class="inp w62">872,171</span>${bar([4])}
        <span class="lab" style="width:10px">Z</span>${bar([5])}
        <span class="inp w62">-706,85</span>
      </div>

      <div class="main">
        <div class="left">
          ${bar(["stack", "pillar", "slab", "panel", "curve", "fh", "fv", "fm"])}
          <span class="hsep"></span>
          ${bar(["cut", "arch", "wave"])}
          <span class="hsep"></span>
          ${bar(["hole"])}
          <span class="hsep"></span>
          ${bar(["sphere", "pyramid"])}
          <span class="hsep"></span>
          ${bar(["doorb", "drawer"])}
        </div>

        <div class="panels">
          <div class="ptitle">Структура модели<span class="ctl"><i></i><u></u><b>✕</b></span></div>
          <div class="ptools">
            ${bar(["tadd", 3, "tplus", 3, "tminus", 8, "tools", 3, "|", "tfind!", 6, "teye", "^"])}
          </div>
          <div class="tree">
            <div class="thead"><span>Объект</span><span class="pos">Поз.</span></div>
            <div class="rows">
              ${TREE.map(
                (r) => html`<div class="row">
                  <span class="node">${r.k === "g" ? html`<span class="pm">+</span>` : ""}</span>
                  ${icon(r.k === "g" ? "stackdark" : r.k === "h" ? "nodeh" : "nodev")}
                  <span class="nm">${r.n}</span>
                  <span class="dm">${r.d ?? ""}</span>
                  <span class="ps">${r.p ?? ""}</span>
                </div>`,
              )}
            </div>
            <div class="sb">
              <span class="up"></span>
              <div class="track"><div class="thumb"><i></i><i></i><i></i></div></div>
              <span class="dn"></span>
            </div>
          </div>
          <div class="divider"></div>
          <div class="blank"></div>
          <div class="ptitle">Свойства<span class="ctl"><i></i><u></u><b>✕</b></span></div>
          <div class="propsel"><div>Объектов не выделено</div></div>
          <div class="proptable">
            <div class="hd"><span>Параметр</span><span>Значение</span></div>
          </div>
        </div>

        <div class="splitter"></div>

        <div class="center">
          <div class="view">
            <svg viewBox="283 111 1287 689" preserveAspectRatio="none">${model()}</svg>
          </div>
          <div class="tabs"><span class="tab">Скитович Л - кухня</span></div>
        </div>

        <div class="right">
          ${bar(["rgrid", "rexp"])}
          <span class="sp h1"></span>
          ${bar(["s1", "s2", "s3"])}
          <span class="sp h2"></span>
          ${bar(["p1", "p2", "p3"])}
          <span class="sp h2"></span>
          ${bar(["sq1", "sq2"])}
          <span class="sp h3"></span>
          ${bar(["n1", "n2", "n3"])}
        </div>
      </div>

      <div class="status">
        <span class="help">?</span>
        ${bar([515, "stree!", "sedit!", "sgrid", "stime", "sfind", "scubes", "sgold", 13, "smat"])}
        <span class="txt">ДВП ламинированная белая (Артикул 52)</span>
      </div>

      <div class="taskbar">
        <span class="task start">
          <svg width="38" height="38" viewBox="0 0 38 38">
            <circle cx="19" cy="19" r="18" fill="#2c74b8" stroke="#a4c8e2"/>
            <path d="M2 15a18 14 0 0 1 34 0z" fill="#7ab4dc" opacity=".7"/>
            <path d="M11 13l7-1v6h-7z" fill="#e8552c"/><path d="M20 12l7-1v7h-7z" fill="#8bc33a"/>
            <path d="M11 20h7v6l-7-1z" fill="#3aa4e0"/><path d="M20 20h7v7l-7-1z" fill="#f0c020"/>
          </svg>
        </span>
        ${this.taskApps()}
        <div class="tray">
          <span>RU</span>
          <svg class="ic" viewBox="0 0 24 24"><circle cx="12" cy="12" r="11" fill="#2138b8" stroke="#dfe6f5" stroke-width="2"/><text x="12" y="18" text-anchor="middle" fill="#fff" font-size="16" font-weight="700" font-family="Liberation Sans">?</text></svg>
          <svg class="ic" viewBox="0 0 24 24"><path d="M4 3h10v8H4z" fill="none" stroke="#dde" stroke-width="2"/><path d="M6 20l7-7 7 7z" fill="#dde"/></svg>
          <svg class="ic" viewBox="0 0 24 24"><path d="M5 10h12v12H5z" fill="#c02030"/><path d="M10 2v8M16 2v8" stroke="#eee" stroke-width="2"/></svg>
          <svg class="ic" viewBox="0 0 24 24"><path d="M5 3h14v12H5zM8 20h8" fill="none" stroke="#eee" stroke-width="2"/><path d="M12 15v5" stroke="#eee" stroke-width="2"/></svg>
          <svg class="ic" viewBox="0 0 24 24"><path d="M3 9h4l5-5v16l-5-5H3z" fill="#dde"/><path d="M15 8a6 6 0 0 1 0 8M18 5a10 10 0 0 1 0 14" fill="none" stroke="#dde" stroke-width="1.6"/></svg>
          <div class="clock">15:21<br />14.05.2023</div>
          <span class="mark">Somontj</span>
        </div>
      </div>
    `;
  }

  taskApps() {
    const sis = html`<span class="logo32">SIS</span>`;
    return html`
      <span class="task">
        <svg width="24" height="36" viewBox="0 0 24 36"><rect x="1" y="1" width="22" height="34" fill="#dfe6ec" stroke="#97a8b8"/><rect x="3" y="3" width="18" height="6" fill="#f2d27a"/><rect x="3" y="11" width="18" height="7" fill="#fff" stroke="#aaa"/><g fill="#7a8a9a">${[0, 1, 2, 3].flatMap((r) => [0, 1, 2, 3].map((c) => svg`<rect x=${4 + c * 4.3} y=${20 + r * 3.5} width="3" height="2.4"/>`))}</g></svg>
      </span>
      <span class="task">
        <svg width="32" height="36" viewBox="0 0 32 36"><ellipse cx="16" cy="18" rx="14" ry="17" fill="#1c4f94" stroke="#4f8ccc" stroke-width="2"/><ellipse cx="16" cy="18" rx="10" ry="13" fill="none" stroke="#7ab0de" stroke-width="2"/><path d="M12 8v20M24 9L12 19l11 12" fill="none" stroke="#7ab0de" stroke-width="3"/></svg>
      </span>
      <span class="task">${sis}</span>
      <span class="task">
        <svg width="32" height="36" viewBox="0 0 32 36"><rect width="32" height="36" fill="#146a2a"/><rect x="27" y="4" width="5" height="28" fill="#0a3f18"/><text x="14" y="26" text-anchor="middle" font-family="Liberation Sans" font-weight="700" font-size="26" fill="#e08a2a">M</text></svg>
      </span>
      <span class="task">
        <svg width="32" height="36" viewBox="0 0 32 36"><ellipse cx="16" cy="18" rx="15" ry="17" fill="#fff"/><path d="M9 8l7 12 7-12M16 20v10" fill="none" stroke="#e8232a" stroke-width="3.4"/></svg>
      </span>
      <span class="task open">
        <svg width="36" height="36" viewBox="0 0 36 36">
          <path d="M18 2a16 16 0 0 1 14 8H18a8 8 0 0 0-7 4L5 8a16 16 0 0 1 13-6z" fill="#e0402c"/>
          <path d="M32 10a16 16 0 0 1-13 24l7-12a8 8 0 0 0-1-12z" fill="#f5c518"/>
          <path d="M5 8l7 12a8 8 0 0 0 7 6l-1 8A16 16 0 0 1 5 8z" fill="#3aa04a"/>
          <circle cx="18" cy="18" r="7" fill="#fff"/><circle cx="18" cy="18" r="5.4" fill="#3a80e0"/>
        </svg>
      </span>
      <span class="task open">${sis}</span>
    `;
  }
}
